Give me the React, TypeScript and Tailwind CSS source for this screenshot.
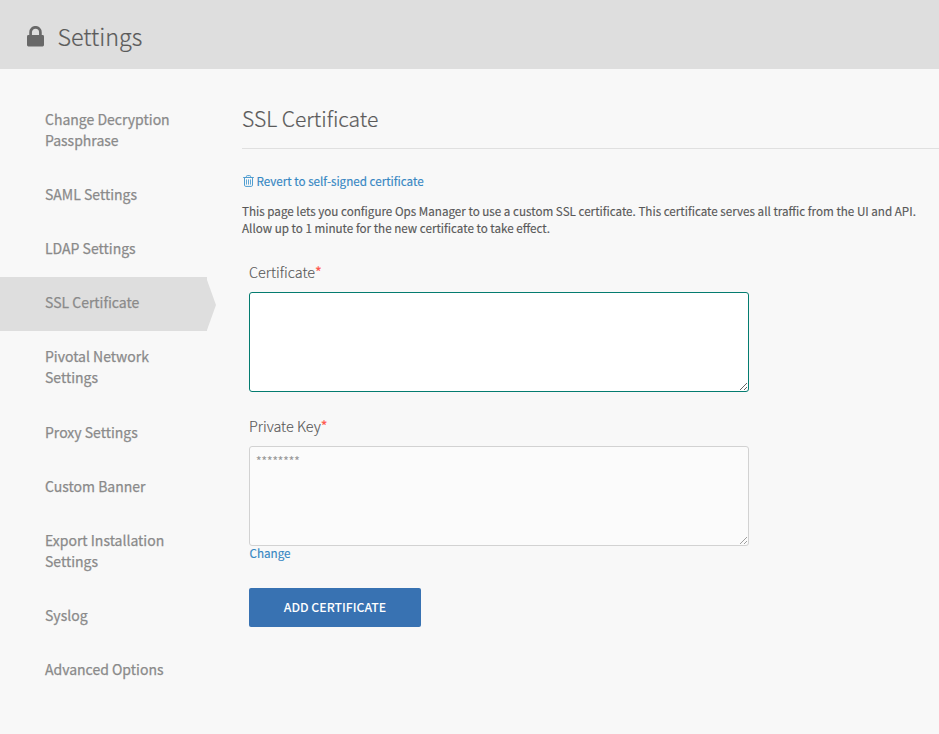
import React from "react";

const navItems: { lines: string[]; active?: boolean }[] = [
  { lines: ["Change Decryption", "Passphrase"] },
  { lines: ["SAML Settings"] },
  { lines: ["LDAP Settings"] },
  { lines: ["SSL Certificate"], active: true },
  { lines: ["Pivotal Network", "Settings"] },
  { lines: ["Proxy Settings"] },
  { lines: ["Custom Banner"] },
  { lines: ["Export Installation", "Settings"] },
  { lines: ["Syslog"] },
  { lines: ["Advanced Options"] },
];

function LockIcon() {
  return (
    <svg width="17" height="21" viewBox="0 0 17 21" className="mt-[3px] block shrink-0" aria-hidden="true">
      <path d="M3.6 10V6.2a4.9 4.9 0 0 1 9.8 0V10" fill="none" stroke="#686868" strokeWidth="2.7" />
      <rect x="0" y="9" width="17" height="11.4" rx="1.4" fill="#686868" />
    </svg>
  );
}

function TrashIcon() {
  return (
    <svg width="11" height="12" viewBox="0 0 11 12" className="mt-px block shrink-0" fill="none" stroke="#4f9dd0" aria-hidden="true">
      <path d="M0.2 2.5h10.6M3.4 2.4V1.5a.9.9 0 0 1 .9-.9h2.4a.9.9 0 0 1 .9.9v.9" />
      <path d="M1.5 3v7.2c0 .7.5 1.2 1.2 1.2h5.6c.7 0 1.2-.5 1.2-1.2V3" />
      <path d="M3.5 4.4v5.2M5.5 4.4v5.2M7.5 4.4v5.2" strokeWidth="0.9" />
    </svg>
  );
}

export default function App() {
  return (
    <div className="min-h-[734px] w-full overflow-hidden bg-[#f8f8f8] font-['Noto_Sans_CJK_SC','Noto_Sans',sans-serif] text-[#585858]">
      <header className="flex h-[69px] items-center bg-[#dedede] pl-[27px]">
        <LockIcon />
        <h1 className="ml-[13.5px] pt-0.5 text-[23.3px] leading-[32px] font-light whitespace-nowrap text-[#5a5a5a] [-webkit-text-stroke:0.2px]">
          Settings
        </h1>
      </header>
      <div className="flex">
        <nav className="w-[216px] shrink-0 pt-[24.5px]">
          {navItems.map((item) => (
            <div key={item.lines.join(" ")} className="flex">
              <a
                className={`block w-[207px] pt-[15.3px] pb-[17.3px] pl-[45px] text-[14px] leading-[21.4px] font-normal whitespace-nowrap text-[#8a8a8a] [-webkit-text-stroke:0.25px] ${
                  item.active ? "bg-[#dedede]" : ""
                }`}
              >
                {item.lines.map((line, i) => (
                  <span key={line} className={i > 0 ? "-mt-[0.4px] mb-[0.4px] block" : "block"}>{line}</span>
                ))}
              </a>
              {item.active && (
                <svg width="9" height="54" viewBox="0 0 9 54" className="block" aria-hidden="true">
                  <path d="M0 3L9 28L0 53z" fill="#dedede" />
                </svg>
              )}
            </div>
          ))}
        </nav>
        <main className="ml-[26px] flex-1">
          <h2 className="mt-[31px] h-[49px] border-b border-[#e0e0e0] text-[21.05px] leading-[36px] font-light whitespace-nowrap text-[#5a5a5a] [-webkit-text-stroke:0.2px]">
            SSL Certificate
          </h2>
          <a className="mt-[23px] flex h-[17px] items-center gap-[2.5px] pl-[1px] text-[11.65px] leading-[17px] whitespace-nowrap text-[#3687c3] [-webkit-text-stroke:0.15px]">
            <TrashIcon />
            <span>Revert to self-signed certificate</span>
          </a>
          <p className="mt-[13px] text-[11.65px] leading-[17px] whitespace-nowrap [-webkit-text-stroke:0.15px]">
            This page lets you configure Ops Manager to use a custom SSL certificate. This certificate serves all traffic from the UI and API.
            <br />
            Allow up to 1 minute for the new certificate to take effect.
          </p>
          <form className="pt-[26px] pl-[7px]">
            <label className="block h-[30px] text-[14.4px] leading-[20px] font-light whitespace-nowrap [-webkit-text-stroke:0.15px]">
              Certificate<span className="font-normal text-[#ff5a50]">*</span>
            </label>
            <textarea className="block h-[100px] w-[500px] rounded-[3px] border border-[#047c70] bg-white outline-none" />
            <label className="mt-6 block h-[30px] text-[14.4px] leading-[20px] font-light whitespace-nowrap [-webkit-text-stroke:0.15px]">
              Private Key<span className="font-normal text-[#ff5a50]">*</span>
            </label>
            <textarea
              className="block h-[100px] w-[500px] rounded-[3px] border border-[#b9b9b9] bg-[#fdfdfd] px-[6px] py-[5px] text-[11.3px] leading-[17px] font-medium text-[#5a5a5a] opacity-60 outline-none"
              defaultValue="********"
            />
            <a className="-mt-[2px] block pl-[0.5px] text-[11.65px] leading-[17px] text-[#3687c3] [-webkit-text-stroke:0.15px]">Change</a>
            <button
              type="button"
              className="mt-[27px] block h-[39px] w-[172px] rounded-[2px] bg-[#3872b2] text-[12.3px] leading-[17px] font-medium text-white"
            >
              ADD CERTIFICATE
            </button>
          </form>
        </main>
      </div>
    </div>
  );
}
